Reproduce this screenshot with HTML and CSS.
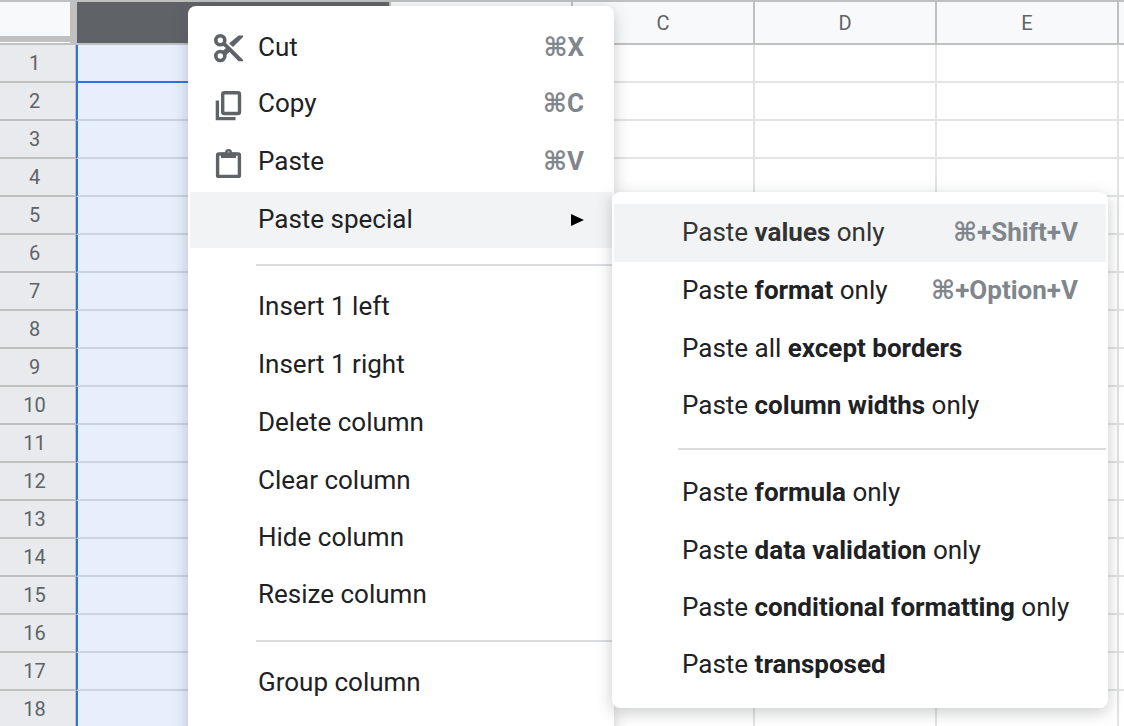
FILE: index.html
```html
<!DOCTYPE html>
<html lang="en">
<head>
<meta charset="utf-8">
<title>Spreadsheet</title>
<link rel="stylesheet" href="styles.css">
</head>
<body>
<main class="app">
  <table class="sheet">
    <colgroup><col class="col-num"><col class="col-a"><col class="col"><col class="col"><col class="col"><col class="col"><col></colgroup>
    <thead>
      <tr><th class="corner"><div class="corner-box"></div></th><th class="head selected" scope="col" aria-label="A"></th><th class="head" scope="col">B</th><th class="head" scope="col">C</th><th class="head" scope="col">D</th><th class="head" scope="col">E</th><th class="head" scope="col" aria-label="F"></th></tr>
    </thead>
    <tbody>
      <tr><th scope="row">1</th><td class="picked active"></td><td></td><td></td><td></td><td></td><td></td></tr>
      <tr><th scope="row">2</th><td class="picked"></td><td></td><td></td><td></td><td></td><td></td></tr>
      <tr><th scope="row">3</th><td class="picked"></td><td></td><td></td><td></td><td></td><td></td></tr>
      <tr><th scope="row">4</th><td class="picked"></td><td></td><td></td><td></td><td></td><td></td></tr>
      <tr><th scope="row">5</th><td class="picked"></td><td></td><td></td><td></td><td></td><td></td></tr>
      <tr><th scope="row">6</th><td class="picked"></td><td></td><td></td><td></td><td></td><td></td></tr>
      <tr><th scope="row">7</th><td class="picked"></td><td></td><td></td><td></td><td></td><td></td></tr>
      <tr><th scope="row">8</th><td class="picked"></td><td></td><td></td><td></td><td></td><td></td></tr>
      <tr><th scope="row">9</th><td class="picked"></td><td></td><td></td><td></td><td></td><td></td></tr>
      <tr><th scope="row">10</th><td class="picked"></td><td></td><td></td><td></td><td></td><td></td></tr>
      <tr><th scope="row">11</th><td class="picked"></td><td></td><td></td><td></td><td></td><td></td></tr>
      <tr><th scope="row">12</th><td class="picked"></td><td></td><td></td><td></td><td></td><td></td></tr>
      <tr><th scope="row">13</th><td class="picked"></td><td></td><td></td><td></td><td></td><td></td></tr>
      <tr><th scope="row">14</th><td class="picked"></td><td></td><td></td><td></td><td></td><td></td></tr>
      <tr><th scope="row">15</th><td class="picked"></td><td></td><td></td><td></td><td></td><td></td></tr>
      <tr><th scope="row">16</th><td class="picked"></td><td></td><td></td><td></td><td></td><td></td></tr>
      <tr><th scope="row">17</th><td class="picked"></td><td></td><td></td><td></td><td></td><td></td></tr>
      <tr><th scope="row">18</th><td class="picked"></td><td></td><td></td><td></td><td></td><td></td></tr>
    </tbody>
  </table>

  <div class="menu context-menu" role="menu">
    <button class="item short" role="menuitem">
      <svg class="icon" viewBox="0 0 36 36" aria-hidden="true"><g fill="none" stroke="#5f6368" stroke-width="3.6"><circle cx="10.3" cy="10.3" r="4.5"/><circle cx="10.3" cy="26" r="4.5"/></g><path fill="#5f6368" d="M12.5 15.5l3-3L33 29.8v1.4h-4.5L19.5 22l-4.5 4-3-4.5 4-3.5zM28.5 5.5H33V7L23 17l-4-3.4z"/></svg>
      <span>Cut</span><kbd>⌘X</kbd>
    </button>
    <button class="item short" role="menuitem">
      <svg class="icon" viewBox="0 0 36 36" aria-hidden="true"><g fill="none" stroke="#5f6368" stroke-width="3.4"><rect x="12.7" y="6.7" width="16.8" height="20.8" rx="1.5"/><path d="M7.4 14.5v18.1h18.1"/></g></svg>
      <span>Copy</span><kbd>⌘C</kbd>
    </button>
    <button class="item tall" role="menuitem">
      <svg class="icon" viewBox="0 0 36 36" aria-hidden="true"><rect x="7.6" y="10" width="21.8" height="22.4" rx="1" fill="none" stroke="#5f6368" stroke-width="3.4"/><path fill="#5f6368" fill-rule="evenodd" d="M11 8.400h4a3.500 3.500 0 0 1 7 0h4V14H11zM18.500 7.500a1.300 1.300 0 1 0 0 2.600 1.300 1.300 0 0 0 0-2.600z"/></svg>
      <span>Paste</span><kbd>⌘V</kbd>
    </button>
    <button class="item short hover" role="menuitem" aria-haspopup="true" aria-expanded="true">
      <span>Paste special</span><svg class="arrow" viewBox="0 0 14 14" aria-hidden="true"><path d="M1 2l13 6-13 6z"/></svg>
    </button>
    <hr>
    <button class="item" role="menuitem"><span>Insert 1 left</span></button>
    <button class="item" role="menuitem"><span>Insert 1 right</span></button>
    <button class="item" role="menuitem"><span>Delete column</span></button>
    <button class="item" role="menuitem"><span>Clear column</span></button>
    <button class="item short" role="menuitem"><span>Hide column</span></button>
    <button class="item" role="menuitem"><span>Resize column</span></button>
    <hr>
    <button class="item" role="menuitem"><span>Group column</span></button>
  </div>

  <div class="menu submenu" role="menu" aria-label="Paste special">
    <button class="item hover" role="menuitem"><span>Paste <b>values</b> only</span><kbd>⌘+Shift+V</kbd></button>
    <button class="item" role="menuitem"><span>Paste <b>format</b> only</span><kbd>⌘+Option+V</kbd></button>
    <button class="item" role="menuitem"><span>Paste all <b>except borders</b></span></button>
    <button class="item short" role="menuitem"><span>Paste <b>column widths</b> only</span></button>
    <hr>
    <button class="item" role="menuitem"><span>Paste <b>formula</b> only</span></button>
    <button class="item" role="menuitem"><span>Paste <b>data validation</b> only</span></button>
    <button class="item short" role="menuitem"><span>Paste <b>conditional formatting</b> only</span></button>
    <button class="item" role="menuitem"><span>Paste <b>transposed</b></span></button>
  </div>
</main>
</body>
</html>
```
FILE: styles.css
```css
* { box-sizing: border-box; }
body { margin: 0; font-family: Roboto, "DejaVu Sans", sans-serif; background: #fff; }
.app { position: relative; height: 100vh; overflow: hidden; }

.sheet { width: 100%; table-layout: fixed; border-collapse: separate; border-spacing: 0; border-top: 2px solid #c0c0c0; }
.col-num { width: 76px; }
.col-a { width: 315px; }
.col { width: 182px; }
.sheet th, .sheet td { height: 38px; padding: 0; border: 0 solid #e2e3e3; border-width: 0 2px 2px 0; }
.sheet th { font-size: 20px; line-height: 24px; font-weight: 400; color: #5f6368; border-color: #c0c0c0; }
.sheet tbody th { background: #e8eaed; border-right-width: 1px; padding-right: 6px; }
.sheet .head { height: 43px; background: #f8f9fa; }
.sheet .selected { background: #5f6368; border-left-width: 1px; }
.sheet th:last-child, .sheet td:last-child { border-right-width: 0; }
.sheet .corner { height: 43px; background: #c0c0c0; border-right-width: 0; vertical-align: top; }
.corner-box { height: 34px; margin-right: 6px; background: #f8f9fa; box-shadow: 0 6px #c0c0c0, 0 7px #fff; }
.sheet .picked { background: #e8effc; border-left: 2px solid #2b75e2; border-bottom-color: #ccd3de; }
.sheet .active { border-bottom-color: #2b75e2; }

.menu { position: absolute; display: flex; flex-direction: column; background: #fff; border-radius: 8px; box-shadow: 0 4px 16px rgba(60, 64, 67, 0.28); }
.context-menu { left: 188px; top: 6px; width: 426px; height: 760px; padding: 14px 2px; }
.submenu { left: 612px; top: 192px; width: 496px; padding: 12px 2px 14px; }
.item { position: relative; flex: none; display: flex; align-items: center; justify-content: space-between; width: 100%; height: 58px; border: 0; margin: 0; padding: 0 28px 2px 68px; background: none; color: #202124; font: inherit; font-size: 26px; line-height: 32px; text-align: left; white-space: nowrap; }
.short { height: 56px; }
.tall { height: 60px; }
.hover { background: #f1f3f4; }
.submenu .hover { color: #333; }
.item b { font-weight: 700; }
kbd { font: inherit; font-weight: 700; color: #80868b; }
.icon { position: absolute; left: 20px; top: 10px; width: 36px; height: 36px; }
.tall .icon { top: 12px; }
.arrow { width: 14px; height: 14px; }
hr { flex: none; width: auto; height: 2px; border: 0; margin: 16px 0 12px 66px; background: #dadce0; }
.submenu hr { margin: 14px 0 14px 64px; }
```
